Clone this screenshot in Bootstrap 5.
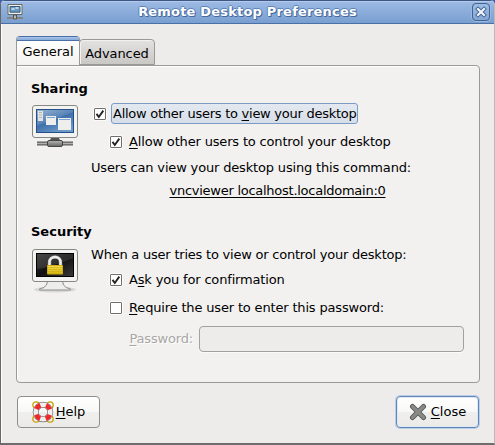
<!DOCTYPE html>
<html lang="en">
<head>
<meta charset="utf-8">
<meta name="viewport" content="width=device-width, initial-scale=1">
<title>Remote Desktop Preferences</title>
<link href="https://cdn.jsdelivr.net/npm/bootstrap@5.3.0/dist/css/bootstrap.min.css" rel="stylesheet">
<style>
body{font-family:"DejaVu Sans",sans-serif;font-size:13px;line-height:16px;color:#000;background:#3b5eb5;overflow:hidden}
u{text-underline-offset:2px;text-decoration-thickness:1px;text-decoration-skip-ink:none}
.window{width:495px;height:445px;background:#edeceb;border:1px solid #686565;border-top:0;border-right-color:#bdbbb9;border-bottom:2px solid #716c6c;border-radius:5px 5px 0 0;overflow:hidden;box-shadow:inset 1px 0 #fff}
.titlebar{height:24px;background:linear-gradient(#9dbae4,#799fd0);border-top:1px solid #3d5782;border-bottom:1px solid #4a70a5;box-shadow:inset 0 1px #b4cbee;padding:0 4px 0 6px}
.title-text{color:#fff;font-weight:700;letter-spacing:.19px;text-shadow:1px 1px #47699c,-1px 0 #5d83b8,0 -1px #5d83b8,1px 0 #5d83b8,0 1px #5d83b8}
.close-box{width:18px;height:18px;border:1px solid #41638f;border-radius:4px;background:linear-gradient(#a0bce5,#83a7d6);box-shadow:0 0 0 1px #9cb9e0}
.tabs{height:29px;margin:12px 0 0 15px}
.tabs .nav-link{font-size:13px;line-height:16px;color:#000;border:1px solid #9a9996;border-radius:4px 4px 0 0;padding:0;text-align:center}
.tabs .tab-general{width:64px;height:30px;border-top:0;background:linear-gradient(#4a70a5 0 1px,#a9c4ec 1px,#86abd9 4px,#4a70a5 4px 5px,#fff 5px,#f3f2f1);padding-top:8px;z-index:2;position:relative;margin-bottom:-1px}
.tabs .tab-advanced{width:76px;height:26px;margin:0 0 0 -1px;background:linear-gradient(#e3e2e0,#c9c8c5);box-shadow:inset 1px 1px #f2f1f0;padding-top:6px;letter-spacing:-.1px}
.panel{width:464px;height:318px;margin-left:15px;border:1px solid #9a9996;border-radius:0 4px 4px 4px;background:#f2f1f0;box-shadow:inset 1px 1px #fff;padding:12px 15px 0 14px}
.section-title{font-size:13px;line-height:21px;height:21px}
.security-title{margin-top:19px}
.side-icon{width:60px}
.lock-icon{padding-top:5px}
.h22{height:22px}.h25{height:25px}.h27{height:27px}.h29{height:29px}.h32{height:32px}
.tight{letter-spacing:-.165px}.tighter{letter-spacing:-.22px}.tightest{letter-spacing:-.26px}
.tick.form-check-input{width:12px;height:12px;margin:0 7px 0 3px;border:1px solid #6f6f6d;border-radius:1px;background-color:#fff;box-shadow:0 0 0 1px #fbfbfa;float:none;flex:none}
.tick.form-check-input:checked{background:#fff url("data:image/svg+xml,%3Csvg xmlns='http://www.w3.org/2000/svg' viewBox='0 0 10 10'%3E%3Cpath d='M1.5 4.9 3.8 8 8.3 1.6' fill='none' stroke='%23222' stroke-width='1.9'/%3E%3C/svg%3E") center/10px 10px no-repeat;border-color:#6f6f6d}
.focused{height:21px;border:1px solid #7b9bc5;border-radius:3px;background:linear-gradient(#e4e9f0,#d6dee9);padding:2px 1px;margin-left:-2px}
.disabled-text{color:#a9a7a4;text-shadow:1px 1px #fff;margin-right:6px}
.password.form-control{height:26px;width:265px;border:1px solid #a3a19e;border-radius:4px;background:#edecea;padding:0;box-shadow:0 1px #fbfbfa}
.actions{margin:13px 15px 0 16px}
.action.btn{height:32px;width:83px;font-size:13px;line-height:16px;color:#000;border:1px solid #8f8e8b;border-radius:4px;background:linear-gradient(#fff,#f8f8f7 50%,#efefed 51%,#ebeae8);padding:0}
.help-icon{margin-right:2px}
.action.preferred{border-color:#5f86b8;box-shadow:0 0 0 1px #bccde5,inset 0 0 0 1px #dfe8f5}
svg{flex:none;display:block}
</style>
</head>
<body>
<main class="window">
<header class="titlebar d-flex align-items-center justify-content-between">
<svg width="16" height="16" viewBox="0 0 16 16"><path d="M1 .5h14v10H1z" fill="#f1f0e9" stroke="#626a67"/><path d="M3 2.500h10v5.700H3z" fill="#6b9ac1" stroke="#355b80"/><path d="M4.500 5h3m1-1h3" stroke="#d5e5ee" stroke-width="1.500"/><path d="M0 14h16" stroke="#85857c" stroke-width="2"/><path d="M6.500 11h3v4h-3z" fill="#bbbaad" stroke="#555"/></svg>
<span class="title-text">Remote Desktop Preferences</span>
<span class="close-box d-flex align-items-center justify-content-center"><svg width="14" height="14" viewBox="0 0 14 14"><path d="m4 4 6 6m0-6-6 6" stroke="#41638f" stroke-width="4" stroke-linecap="square"/><path d="m4 4 6 6m0-6-6 6" stroke="#f0f4fa" stroke-width="2.200" stroke-linecap="square"/></svg></span>
</header>
<nav class="tabs nav d-flex align-items-end">
<a class="nav-link tab-general">General</a>
<a class="nav-link tab-advanced">Advanced</a>
</nav>
<section class="panel">
<h2 class="section-title fw-bold m-0">Sharing</h2>
<div class="d-flex">
<div class="side-icon pt-1">
<svg width="48" height="46" viewBox="0 0 48 46">
<defs><linearGradient id="sky" x2="0.6" y2="1"><stop stop-color="#9ab5d4"/><stop offset=".5" stop-color="#5884b8"/><stop offset=".55" stop-color="#3f70ab"/><stop offset="1" stop-color="#6e9ac9"/></linearGradient><linearGradient id="hub" x2="0" y2="1"><stop stop-color="#b6b7b2"/><stop offset="1" stop-color="#666763"/></linearGradient></defs>
<path d="M6 40.500h36" stroke="#5b5c59" stroke-width="4"/><path d="M6 40.500h36" stroke="#b1b2af" stroke-width="1.500"/>
<path d="M20.500 34h7l2 4h-11z" fill="#555753"/>
<rect x="1.500" y="2.500" width="45" height="32" rx="2.500" fill="#f3f3f1" stroke="#868883"/>
<rect x="5.500" y="6.500" width="37" height="23" fill="url(#sky)" stroke="#23508b"/>
<path d="M7 8h5v10H7z" fill="#e2e4e2"/><path d="M8 9.500h3M8 12h3M8 14.500h3" stroke="#b5b7b5"/>
<path d="M15 13h10v9H15z" fill="#eeefed"/><path d="M16 14.500h8" stroke="#7ba3d6"/>
<path d="M27 15h13v12H27z" fill="#eeefed"/><path d="M28 16.500h11" stroke="#7ba3d6"/>
<rect x="16.500" y="37.500" width="15" height="6" rx="1.500" fill="url(#hub)" stroke="#464744"/>
</svg>
</div>
<div class="flex-grow-1">
<div class="h29 d-flex align-items-center tightest"><input class="tick form-check-input" type="checkbox" checked id="view"><label class="focused" for="view">Allow other users to <u>v</u>iew your desktop</label></div>
<div class="h27 d-flex align-items-center ms-3 tight"><input class="tick form-check-input" type="checkbox" checked id="control"><label for="control"><u>A</u>llow other users to control your desktop</label></div>
<div class="h25 d-flex align-items-center tight">Users can view your desktop using this command:</div>
<div class="h22 d-flex align-items-center justify-content-center tightest"><u>vncviewer localhost.localdomain:0</u></div>
</div>
</div>
<h2 class="section-title security-title fw-bold mb-0">Security</h2>
<div class="d-flex">
<div class="side-icon lock-icon">
<svg width="48" height="46" viewBox="0 0 48 46">
<defs><linearGradient id="night" x2="1" y2="1"><stop stop-color="#383838"/><stop offset=".5" stop-color="#111"/><stop offset="1" stop-color="#3a3a3a"/></linearGradient><linearGradient id="gold" x2="0" y2="1"><stop stop-color="#f8df4d"/><stop offset="1" stop-color="#d7b50d"/></linearGradient></defs>
<ellipse cx="24" cy="42.500" rx="21" ry="3" fill="#d8d8d6"/>
<path d="M16.500 34h15l1 4q2 3 7 4v1h-31v-1q5-1 7-4z" fill="#ededeb" stroke="#8c8e89"/>
<rect x="1.500" y="2.500" width="45" height="32" rx="2.500" fill="#f3f3f1" stroke="#868883"/>
<rect x="5.500" y="6.500" width="37" height="23" fill="url(#night)" stroke="#000"/>
<path d="M6 29V22q15-2 36-11v-4H6z" fill="#777" opacity=".28"/>
<path d="M18.500 19v-4a5.500 5 0 0 1 11 0v4" fill="none" stroke="#8a8a87" stroke-width="3.500"/><path d="M18.500 19v-4a5.500 5 0 0 1 11 0v4" fill="none" stroke="#eee" stroke-width="2.400"/>
<path d="M16.500 18.500h15v8.500h-15z" fill="url(#gold)" stroke="#c9aa10"/><path d="M17 20.500h14M17 22.500h14M17 24.500h14" stroke="#c9a916" opacity=".6"/>
</svg>
</div>
<div class="flex-grow-1">
<div class="h25 d-flex align-items-center tighter">When a user tries to view or control your desktop:</div>
<div class="h25 d-flex align-items-center ms-3 tight"><input class="tick form-check-input" type="checkbox" checked id="ask"><label for="ask">A<u>s</u>k you for confirmation</label></div>
<div class="h32 d-flex align-items-center ms-3 tight"><input class="tick form-check-input" type="checkbox" id="require"><label for="require"><u>R</u>equire the user to enter this password:</label></div>
<div class="h29 d-flex align-items-center justify-content-end"><label class="disabled-text tight" for="password"><u>P</u>assword:</label><input class="password form-control" id="password" type="password" disabled></div>
</div>
</div>
</section>
<footer class="actions d-flex justify-content-between">
<button class="action btn d-flex align-items-center justify-content-center" type="button">
<svg class="help-icon" width="22" height="22" viewBox="0 0 22 22"><g fill="none" stroke="#c4a000" stroke-width="1.300"><circle cx="4" cy="4" r="3.200"/><circle cx="18" cy="4" r="3.200"/><circle cx="4" cy="18" r="3.200"/><circle cx="18" cy="18" r="3.200"/></g><circle cx="11" cy="11" r="7.300" fill="none" stroke="#777" stroke-width="6"/><circle cx="11" cy="11" r="7.300" fill="none" stroke="#eeeeec" stroke-width="4.600"/><circle cx="11" cy="11" r="7.300" fill="none" stroke="#ef2929" stroke-width="4.800" stroke-dasharray="5.730 5.730" stroke-dashoffset="-2.870"/></svg>
<span><u>H</u>elp</span></button>
<button class="action preferred btn d-flex align-items-center justify-content-center gap-1" type="button">
<svg width="18" height="18" viewBox="0 0 18 18"><path d="m3.500 3.500 11 11m0-11-11 11" stroke="#555753" stroke-width="5" stroke-linecap="round"/><path d="m3.500 3.500 11 11m0-11-11 11" stroke="#888a85" stroke-width="3.200" stroke-linecap="round"/></svg>
<span><u>C</u>lose</span></button>
</footer>
</main>
<script src="https://cdn.jsdelivr.net/npm/bootstrap@5.3.0/dist/js/bootstrap.bundle.min.js"></script>
</body>
</html>
